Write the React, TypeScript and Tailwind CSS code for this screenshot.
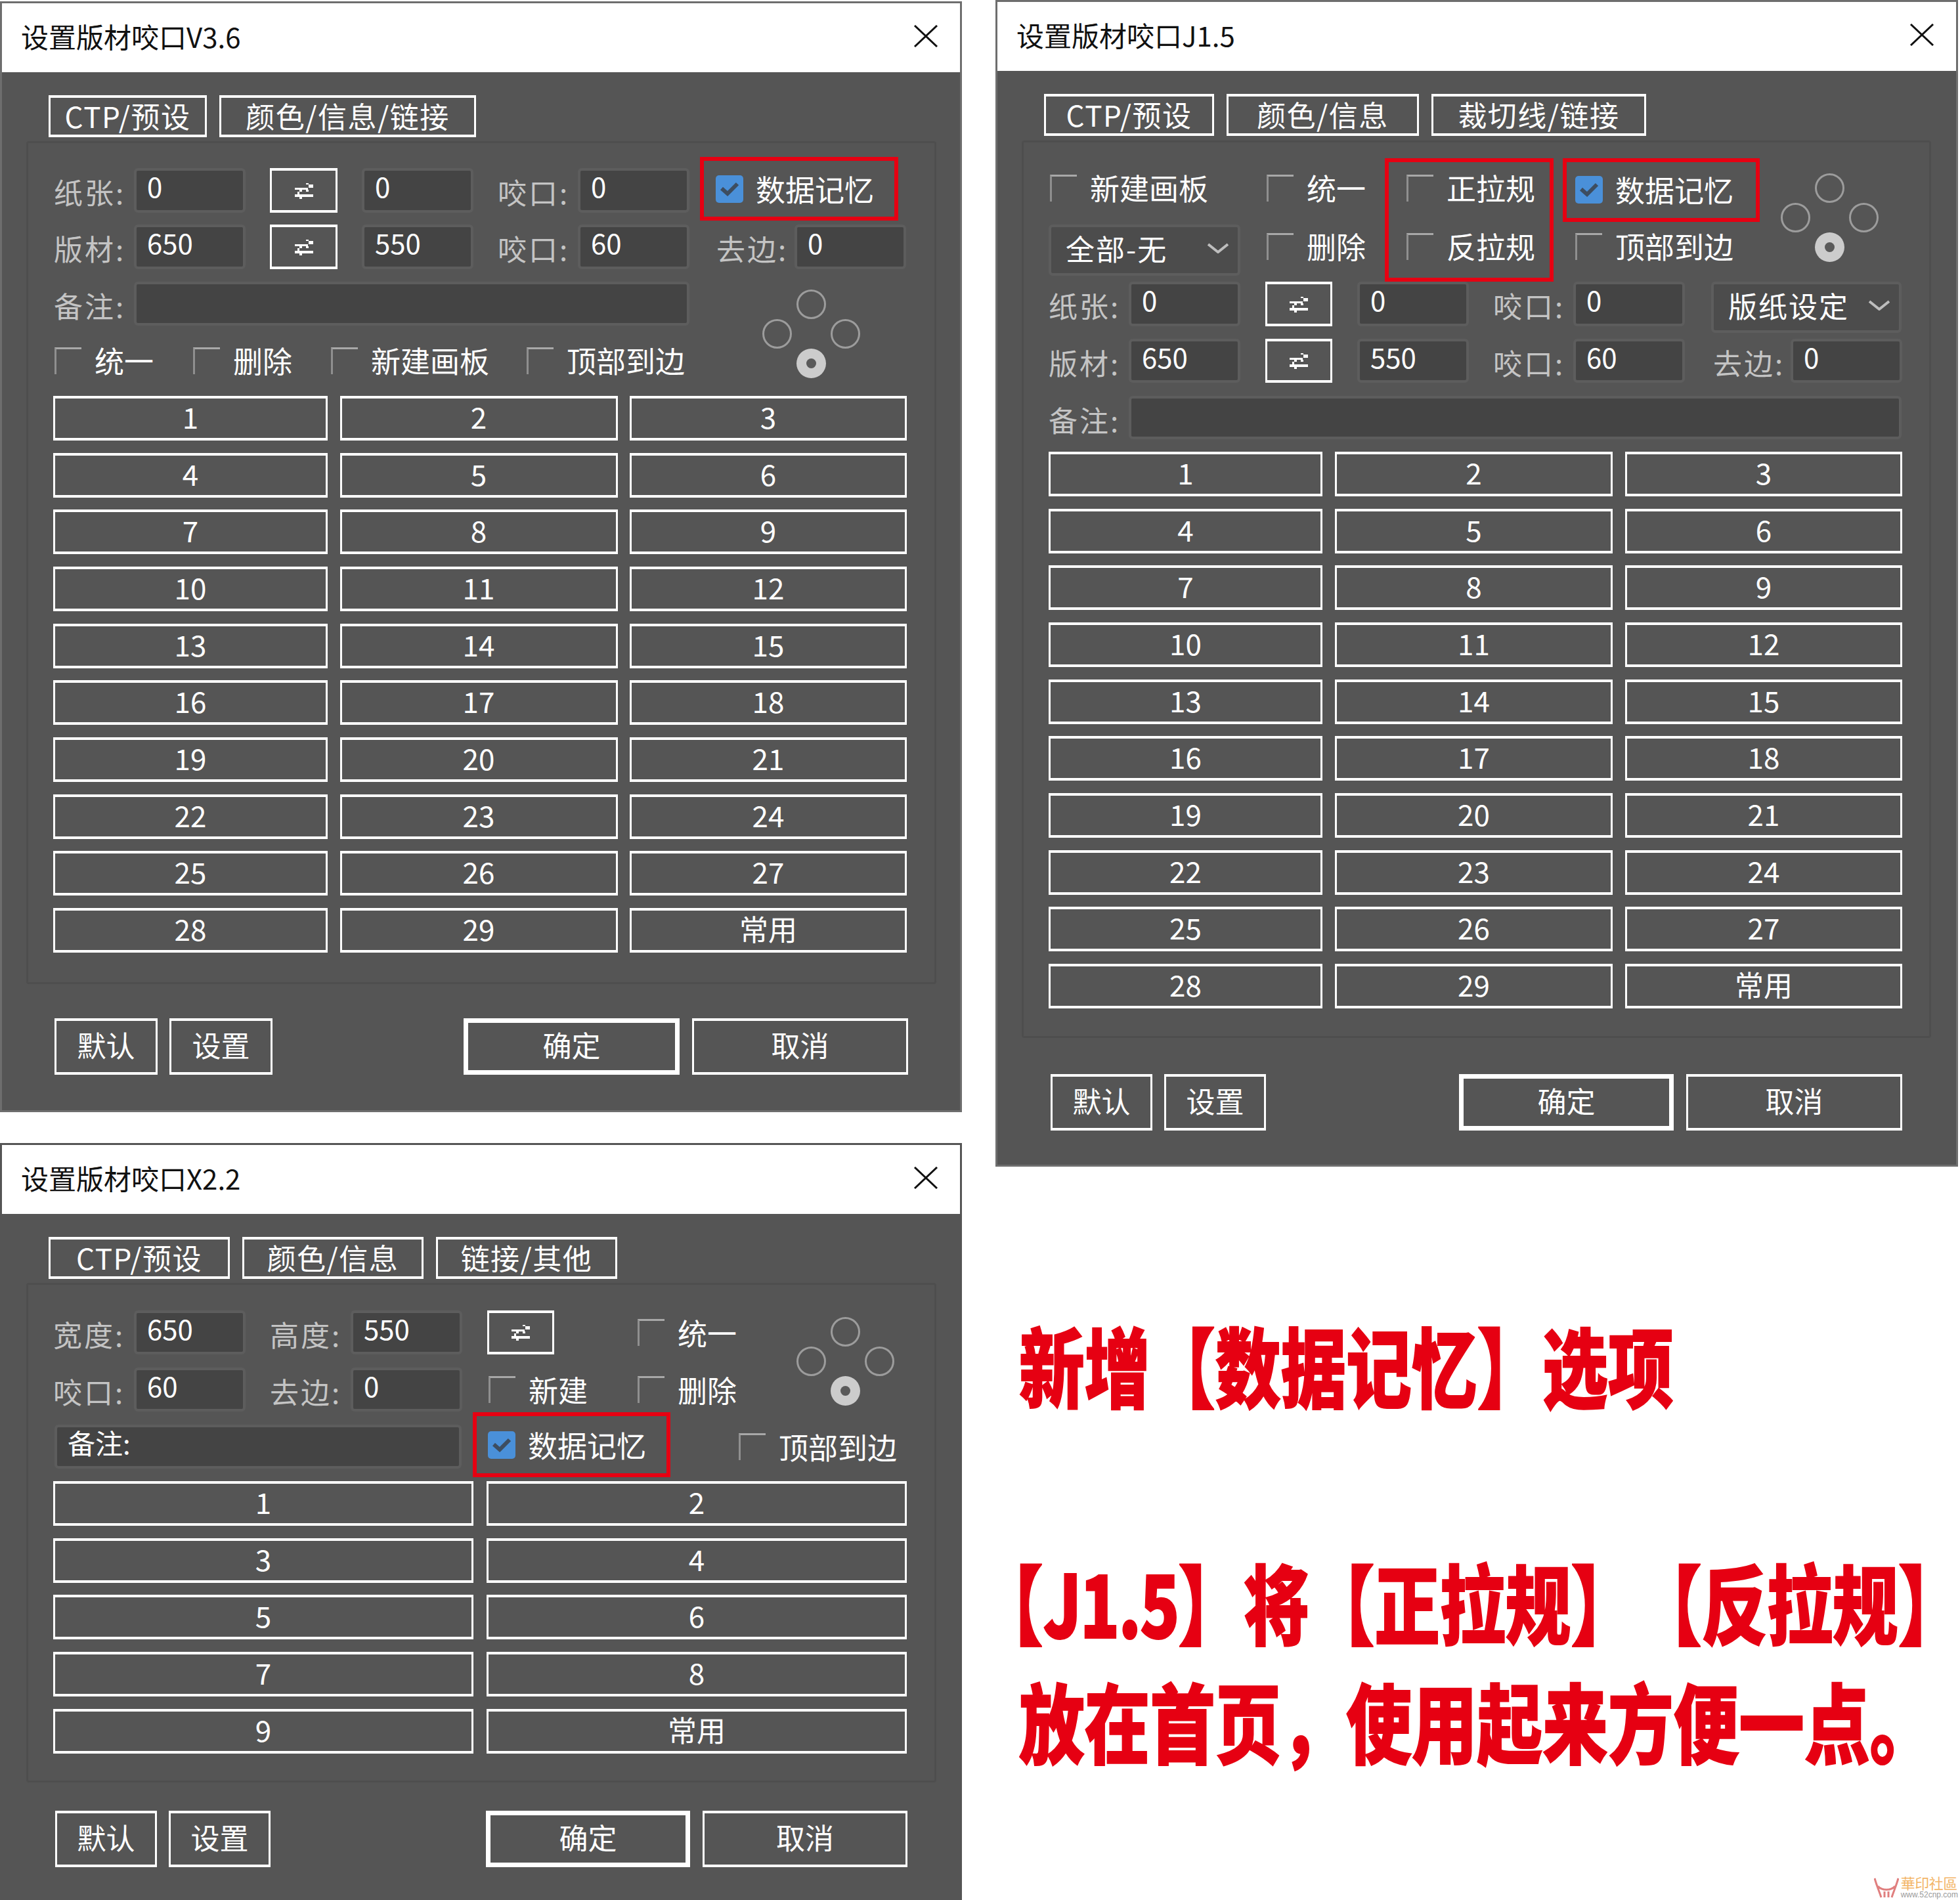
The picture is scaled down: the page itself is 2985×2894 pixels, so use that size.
import { ReactNode } from "react";
import clsx from "clsx";

function CloseIcon() {
  return (
    <svg width="38" height="34" viewBox="0 0 38 34" fill="none" stroke="#111" strokeWidth="3" aria-hidden>
      <path d="M2 1 36 33M36 1 2 33" />
    </svg>
  );
}

function SwapIcon() {
  return (
    <svg width="28" height="25" viewBox="0 0 85 75" fill="#fff" shapeRendering="crispEdges" aria-hidden>
      <rect x="0" y="25" width="62" height="7" />
      <rect x="52" y="3" width="12" height="7" />
      <rect x="64" y="10" width="21" height="15" />
      <rect x="52" y="32" width="12" height="11" />
      <rect x="22" y="32" width="10" height="11" />
      <rect x="12" y="43" width="10" height="10" />
      <rect x="0" y="53" width="85" height="14" />
      <rect x="22" y="67" width="10" height="8" />
    </svg>
  );
}

function Dialog({ title, className, children }: { title: string; className: string; children: ReactNode }) {
  return (
    <div className={clsx("flex flex-col overflow-hidden border-[3px] border-[#6e6e6e] bg-[#555555]", className)}>
      <div className="flex h-[105px] shrink-0 items-center justify-between bg-white pr-[33px] pb-[6px] pl-[29px] text-[42px] text-[#111]">
        <span>{title}</span>
        <CloseIcon />
      </div>
      {children}
    </div>
  );
}

function Tabs({ items, widths }: { items: string[]; widths: string[] }) {
  return (
    <div className="mt-[35px] ml-[71px] flex gap-x-[19px]">
      {items.map((t, i) => (
        <div
          key={t}
          className={clsx(
            "flex h-[64px] items-center justify-center border-x-[3px] border-y-4 border-white pb-[2px] text-[44px] tracking-[1.5px] text-white",
            widths[i],
          )}
        >
          {t}
        </div>
      ))}
    </div>
  );
}

function Btn({ children, className }: { children: ReactNode; className?: string }) {
  return (
    <div
      className={clsx(
        "flex items-center justify-center border-x-[3px] border-y-4 border-white pb-[6px] text-[44px] leading-none text-white",
        className,
      )}
    >
      {children}
    </div>
  );
}

function Label({ text, className }: { text: string; className: string }) {
  return (
    <div className={clsx("shrink-0 -translate-x-[2px] pt-[6px] text-[44px] leading-[60px] tracking-[3px] text-[#c4c4c4]", className)}>
      {text}
    </div>
  );
}

function Input({ value, className }: { value?: string; className: string }) {
  return (
    <div
      className={clsx(
        "flex h-full shrink-0 items-start rounded-[6px] border-4 border-[#5d5d5d] bg-[#444444] pl-[16px] text-[42px] leading-[46px] text-white",
        className,
      )}
    >
      {value}
    </div>
  );
}

function Swap({ className }: { className: string }) {
  return (
    <div className={clsx("flex h-full shrink-0 items-center justify-center border-x-[3px] border-y-4 border-white", className)}>
      <SwapIcon />
    </div>
  );
}

function Check({ label, className, checked }: { label: string; className?: string; checked?: boolean }) {
  return (
    <div className={clsx("flex shrink-0 items-center text-[45px] leading-[42px] text-white", className)}>
      {checked ? (
        <div className="mr-[19px] flex size-[42px] shrink-0 items-center justify-center rounded-[5px] bg-[#4a90d9]">
          <svg width="30" height="24" viewBox="0 0 30 24" fill="none" stroke="#3d4d60" strokeWidth="6" aria-hidden>
            <path d="M3 11 12 19 27 4" />
          </svg>
        </div>
      ) : (
        <div className="mr-[20px] size-[41px] shrink-0 border-t-[3px] border-l-[3px] border-t-[#a8a8a8] border-l-[#8f8f8f]" />
      )}
      <span className="whitespace-nowrap">{label}</span>
    </div>
  );
}

function RadioPad({ className }: { className: string }) {
  const ring = "size-[45px] rounded-full border-[3px] border-[#9c9c9c]";
  return (
    <div className={clsx("grid h-[135px] w-[156px] shrink-0 grid-cols-3 grid-rows-3 place-items-center", className)}>
      <div />
      <div className={ring} />
      <div />
      <div className={ring} />
      <div />
      <div className={ring} />
      <div />
      <div className="flex size-[45px] items-center justify-center rounded-full bg-[#cccccc]">
        <div className="size-[15px] rounded-full bg-[#5a5a5a]" />
      </div>
      <div />
    </div>
  );
}

function Select({ text, className }: { text: string; className: string }) {
  return (
    <div
      className={clsx(
        "flex h-[78px] shrink-0 items-center justify-between rounded-[6px] border-4 border-[#5d5d5d] bg-[#4c4c4c] pr-[14px] pb-[6px] pl-[22px] text-[44px] tracking-[2px] text-white",
        className,
      )}
    >
      <span>{text}</span>
      <svg width="32" height="16" viewBox="0 0 32 16" fill="none" stroke="#bdbdbd" strokeWidth="4" aria-hidden>
        <path d="M1 2 16 14 31 2" />
      </svg>
    </div>
  );
}

function Footer({ className, widths, okWidth, cancelWidth, spacer }: { className: string; widths: string; okWidth: string; cancelWidth: string; spacer: string }) {
  return (
    <div className={clsx("flex h-[86px] shrink-0", className)}>
      <Btn className={widths}>默认</Btn>
      <Btn className={clsx("ml-[18px]", widths)}>设置</Btn>
      <Btn className={clsx("border-[7px]!", spacer, okWidth)}>确定</Btn>
      <Btn className={clsx("ml-[19px]", cancelWidth)}>取消</Btn>
    </div>
  );
}

const thirty = [
  "1", "2", "3", "4", "5", "6", "7", "8", "9", "10", "11", "12", "13", "14", "15",
  "16", "17", "18", "19", "20", "21", "22", "23", "24", "25", "26", "27", "28", "29", "常用",
];

function DialogV36() {
  return (
    <Dialog title="设置版材咬口V3.6" className="mt-[2px] h-[1692px] w-[1465px]">
      <Tabs items={["CTP/预设", "颜色/信息/链接"]} widths={["w-[241px]", "w-[391px]"]} />
      <div className="mt-[6px] ml-[37px] h-[1284px] w-[1386px] rounded-[4px] border-[3px] border-[#4e4e4e]">
        <div className="mt-[38px] flex h-[68px]">
          <Label text="纸张:" className="ml-[41px] w-[120px]" />
          <Input value="0" className="w-[170px]" />
          <Swap className="ml-[37px] w-[103px]" />
          <Input value="0" className="ml-[37px] w-[170px]" />
          <Label text="咬口:" className="ml-[39px] w-[120px]" />
          <Input value="0" className="w-[170px]" />
          <div className="ml-[16px] -mt-[17px] flex h-[97px] w-[302px] shrink-0 items-center border-[6px] border-[#e60012] pl-[18px]">
            <Check label="数据记忆" checked />
          </div>
        </div>
        <div className="mt-[18px] flex h-[68px]">
          <Label text="版材:" className="ml-[41px] w-[120px]" />
          <Input value="650" className="w-[170px]" />
          <Swap className="ml-[37px] w-[103px]" />
          <Input value="550" className="ml-[37px] w-[170px]" />
          <Label text="咬口:" className="ml-[39px] w-[120px]" />
          <Input value="60" className="w-[170px]" />
          <Label text="去边:" className="ml-[43px] w-[117px]" />
          <Input value="0" className="w-[170px]" />
        </div>
        <div className="mt-[19px] flex">
          <div className="w-[1114px] shrink-0">
            <div className="flex h-[67px]">
              <Label text="备注:" className="ml-[41px] w-[120px]" />
              <Input className="w-[846px]" />
            </div>
            <div className="mt-[32px] flex h-[42px]">
              <Check label="统一" className="ml-[40px] w-[211px]" />
              <Check label="删除" className="w-[210px]" />
              <Check label="新建画板" className="w-[298px]" />
              <Check label="顶部到边" />
            </div>
          </div>
          <RadioPad className="mt-[12px]" />
        </div>
        <div className="mt-[27px] ml-[38px] grid grid-cols-[418px_423px_422px] gap-x-[18.5px] gap-y-[18.67px]">
          {thirty.map((t) => (
            <Btn key={t} className="h-[68px]">
              {t}
            </Btn>
          ))}
        </div>
      </div>
      <Footer
        className="mt-[52px] ml-[80px]"
        widths="w-[157px]"
        spacer="ml-[291px]"
        okWidth="w-[329px]"
        cancelWidth="w-[329px]"
      />
    </Dialog>
  );
}

function DialogJ15() {
  return (
    <Dialog title="设置版材咬口J1.5" className="h-[1777px] w-[1466px]">
      <Tabs items={["CTP/预设", "颜色/信息", "裁切线/链接"]} widths={["w-[259px]", "w-[293px]", "w-[327px]"]} />
      <div className="mt-[7px] ml-[37px] h-[1367px] w-[1385px] rounded-[4px] border-[3px] border-[#4e4e4e]">
        <div className="mt-[24px] flex h-[188px]">
          <div className="ml-[38px] w-[292px] shrink-0 pt-[24px]">
            <Check label="新建画板" className="ml-[2px]" />
            <Select text="全部-无" className="mt-[35px] w-[292px]" />
          </div>
          <div className="ml-[40px] w-[180px] shrink-0 pt-[24px]">
            <Check label="统一" />
            <Check label="删除" className="mt-[47px]" />
          </div>
          <div className="w-[257px] shrink-0 border-[6px] border-[#e60012] pt-[18px] pl-[27px]">
            <Check label="正拉规" />
            <Check label="反拉规" className="mt-[47px]" />
          </div>
          <div className="ml-[14px] w-[300px] shrink-0">
            <div className="flex h-[97px] items-center border-[6px] border-[#e60012] pb-[2px] pl-[13px]">
              <Check label="数据记忆" checked />
            </div>
            <Check label="顶部到边" className="mt-[16px] ml-[19px]" />
          </div>
          <RadioPad className="mt-[23px] ml-[28px]" />
        </div>
        <div className="flex h-[68px]">
          <Label text="纸张:" className="ml-[40px] w-[120px]" />
          <Input value="0" className="w-[170px]" />
          <Swap className="ml-[38px] w-[102px]" />
          <Input value="0" className="ml-[38px] w-[170px]" />
          <Label text="咬口:" className="ml-[39px] w-[120px]" />
          <Input value="0" className="w-[170px]" />
          <Select text="版纸设定" className="ml-[40px] w-[290px]" />
        </div>
        <div className="mt-[19px] flex h-[67px]">
          <Label text="版材:" className="ml-[40px] w-[120px]" />
          <Input value="650" className="w-[170px]" />
          <Swap className="ml-[38px] w-[102px]" />
          <Input value="550" className="ml-[38px] w-[170px]" />
          <Label text="咬口:" className="ml-[39px] w-[120px]" />
          <Input value="60" className="w-[170px]" />
          <Label text="去边:" className="ml-[45px] w-[116px]" />
          <Input value="0" className="w-[170px]" />
        </div>
        <div className="mt-[20px] flex h-[66px]">
          <Label text="备注:" className="ml-[40px] w-[120px]" />
          <Input className="w-[1177px]" />
        </div>
        <div className="mt-[19px] ml-[38px] grid grid-cols-[417px_423px_422px] gap-x-[19px] gap-y-[18.67px]">
          {thirty.map((t) => (
            <Btn key={t} className="h-[68px]">
              {t}
            </Btn>
          ))}
        </div>
      </div>
      <Footer
        className="mt-[55px] ml-[81px]"
        widths="w-[155px]"
        spacer="ml-[294px]"
        okWidth="w-[327px]"
        cancelWidth="w-[329px]"
      />
    </Dialog>
  );
}

function DialogX22() {
  return (
    <Dialog title="设置版材咬口X2.2" className="mt-[47px] h-[1153px] w-[1465px] border-b-0 border-[#555555]">
      <Tabs items={["CTP/预设", "颜色/信息", "链接/其他"]} widths={["w-[276px]", "w-[276px]", "w-[276px]"]} />
      <div className="mt-[6px] ml-[37px] h-[761px] w-[1386px] shrink-0 rounded-[4px] border-[3px] border-[#4e4e4e]">
        <div className="mt-[39px] flex">
          <div className="w-[1166px] shrink-0">
            <div className="flex h-[67px]">
              <Label text="宽度:" className="ml-[40px] w-[121px]" />
              <Input value="650" className="w-[170px]" />
              <Label text="高度:" className="ml-[39px] w-[121px]" />
              <Input value="550" className="w-[170px]" />
              <Swap className="ml-[38px] w-[102px]" />
              <Check label="统一" className="ml-[127px]" />
            </div>
            <div className="mt-[20px] flex h-[67px]">
              <Label text="咬口:" className="ml-[40px] w-[121px]" />
              <Input value="60" className="w-[170px]" />
              <Label text="去边:" className="ml-[39px] w-[121px]" />
              <Input value="0" className="w-[170px]" />
              <Check label="新建" className="ml-[40px] w-[227px]" />
              <Check label="删除" />
            </div>
          </div>
          <RadioPad className="mt-[10px]" />
        </div>
        <div className="mt-[20px] flex h-[67px]">
          <Input value="备注:" className="ml-[40px] w-[620px]" />
          <div className="-mt-[19px] ml-[17px] flex h-[99px] w-[301px] shrink-0 items-center border-[6px] border-[#e60012] pl-[17px]">
            <Check label="数据记忆" checked />
          </div>
          <Check label="顶部到边" className="ml-[104px]" />
        </div>
        <div className="mt-[19px] ml-[38px] grid grid-cols-[640px_640px] gap-x-[20px] gap-y-[18.67px]">
          {["1", "2", "3", "4", "5", "6", "7", "8", "9", "常用"].map((t) => (
            <Btn key={t} className="h-[68px]">
              {t}
            </Btn>
          ))}
        </div>
      </div>
      <Footer
        className="mt-[43px] ml-[81px]"
        widths="w-[155px]"
        spacer="ml-[328px]"
        okWidth="w-[311px]"
        cancelWidth="w-[312px]"
      />
    </Dialog>
  );
}

function Note({ children, className }: { children: ReactNode; className: string }) {
  return (
    <div
      className={clsx(
        "w-max origin-left scale-x-[0.755] text-[132px] leading-[130px] font-black whitespace-nowrap text-[#e60012] [text-spacing-trim:space-all] [-webkit-text-stroke:2px_#e60012]",
        className,
      )}
    >
      {children}
    </div>
  );
}

function Watermark() {
  return (
    <div className="mt-auto mr-[3px] flex items-end justify-end pb-[2px]">
      <svg width="38" height="34" viewBox="0 0 38 34" fill="none" stroke="#e07f7f" strokeWidth="3" aria-hidden>
        <path d="M1 3C4 14 7 20 11 32M37 3C34 14 31 20 27 32M6 15C12 22 26 22 32 15M16 23V32M22 23V32" />
      </svg>
      <div className="ml-[3px] flex w-max flex-col items-start">
        <span className="text-[22px] leading-[25px] tracking-[-0.5px] whitespace-nowrap text-[#f3b668]">華印社區</span>
        <span className="font-['Liberation_Sans',sans-serif] text-[12px] leading-[12px] whitespace-nowrap text-[#9a9a9a]">www.52cnp.com</span>
      </div>
    </div>
  );
}

export default function App() {
  return (
    <div className="flex h-[2894px] w-[2985px] bg-white font-['Noto_Sans_CJK_SC','Noto_Sans',sans-serif]">
      <div className="w-[1516px] shrink-0">
        <DialogV36 />
        <DialogX22 />
      </div>
      <div className="flex h-full w-[1469px] shrink-0 flex-col">
        <DialogJ15 />
        <Note className="mt-[235px] ml-[36px]">新增【数据记忆】选项</Note>
        <Note className="mt-[231px] -ml-[27px]">
          【<span className="tracking-[-3px]">J1.5</span>】将【正拉规】【反拉规】
        </Note>
        <Note className="mt-[51px] ml-[36px]">放在首页，使用起来方便一点。</Note>
        <Watermark />
      </div>
    </div>
  );
}
